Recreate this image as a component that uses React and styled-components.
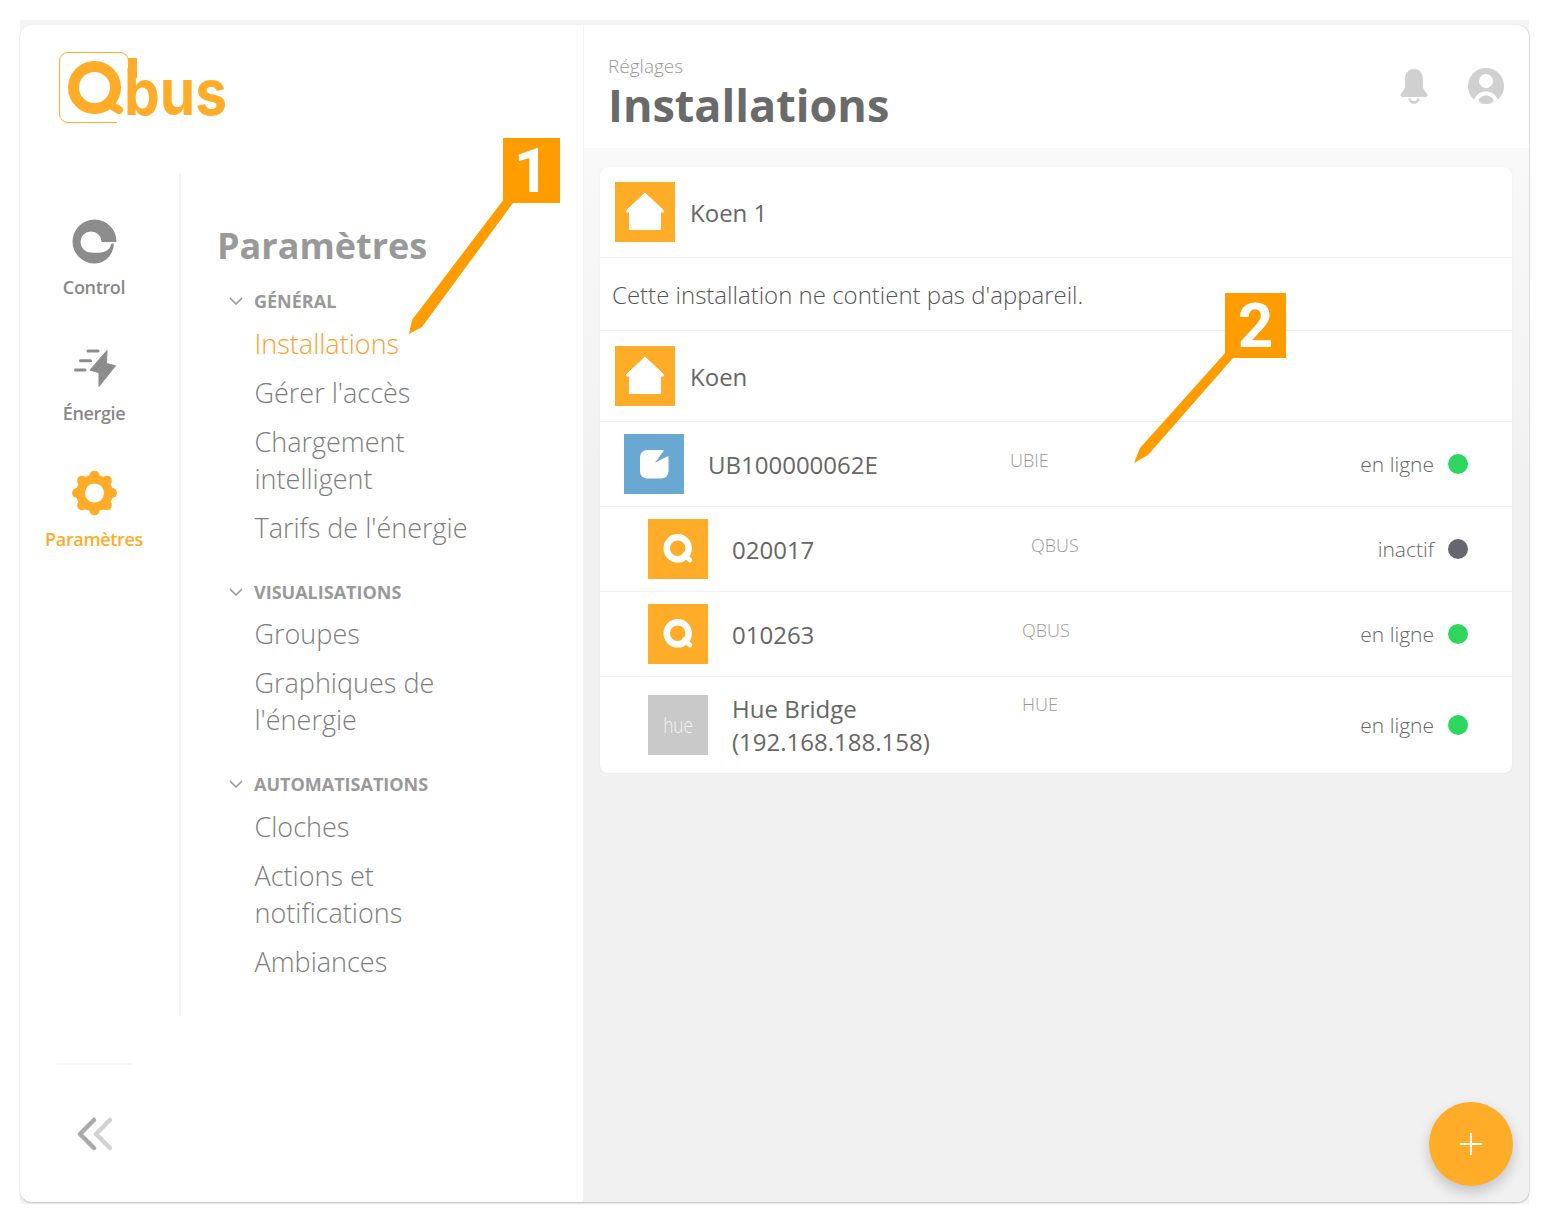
import React from "react";
import styled, { createGlobalStyle } from "styled-components";

const ORANGE = "#ffad29";
const CALLOUT = "#ff9c00";

const Global = createGlobalStyle`
  html, body { margin: 0; padding: 0; background: #fff; }
  body { font-family: "Open Sans", "Liberation Sans", sans-serif; color: #666; }
  * { box-sizing: border-box; }
`;

const Page = styled.div`
  position: relative;
  width: 1550px;
  height: 1224px;
  padding: 20px 21px 20px 20px;
  overflow: hidden;
`;
const Frame = styled.div`
  height: 1184px;
  background: #f5f5f5;
  padding-top: 5px;
`;
const Card = styled.div`
  display: flex;
  height: 1177px;
  background: #fff;
  border-radius: 12px;
  overflow: hidden;
  box-shadow: 0 1px 2px rgba(0, 0, 0, 0.22), 1px 0 1px rgba(0, 0, 0, 0.08);
`;
const Left = styled.aside`
  flex: 0 0 564px;
  display: flex;
  flex-direction: column;
  border-right: 1px solid #f4f4f4;
`;
const LogoRow = styled.div`
  height: 148px;
  padding: 27px 0 0 39px;
`;
const Columns = styled.div`
  display: flex;
  height: 843px;
`;
const Rail = styled.nav`
  flex: 0 0 161px;
  display: flex;
  flex-direction: column;
  gap: 46px;
  padding: 46px 0 0 0;
  border-right: 2px solid #f4f4f4;
`;
const RailItem = styled.div`
  display: flex;
  flex-direction: column;
  align-items: center;
  width: 148px;
  height: 80px;
  font-weight: 600;
  font-size: 18px;
  line-height: 24px;
  letter-spacing: -0.35px;
  color: ${(p) => (p.$active ? ORANGE : "#888")};
`;
const RailIcon = styled.div`
  height: 46px;
  margin-bottom: 10px;
  display: flex;
  align-items: center;
  justify-content: center;
`;
const SubNav = styled.div`
  flex: 1;
  padding: 49px 0 0 36px;
`;
const SubTitle = styled.h2`
  margin: 0 0 19px;
  font-size: 36px;
  line-height: 48px;
  font-weight: 700;
  color: #999;
`;
const Section = styled.section`
  & + & { margin-top: 34px; }
`;
const SectionHead = styled.div`
  display: flex;
  align-items: center;
  gap: 11px;
  height: 24px;
  margin: 0 0 ${(p) => p.$after}px 12px;
  font-size: 18px;
  font-weight: 700;
  color: #999;
`;
const Items = styled.ul`
  list-style: none;
  margin: 0;
  padding: 0 0 0 37.5px;
  display: flex;
  flex-direction: column;
  gap: 12px;
`;
const Item = styled.li`
  font-size: 27px;
  line-height: 37px;
  font-weight: 300;
  width: 240px;
  color: ${(p) => (p.$active ? "#ffa030" : "#7d7d7d")};
`;
const Foot = styled.div`
  width: 150px;
  padding: 47px 0 0 37px;
  display: flex;
  flex-direction: column;
`;
const FootLine = styled.div`
  width: 75px;
  height: 2px;
  background: #f5f5f5;
  margin-bottom: 51px;
`;
const CollapseBtn = styled.div`
  margin-left: 17px;
  line-height: 0;
`;
const Main = styled.main`
  flex: 1;
  display: flex;
  flex-direction: column;
  min-width: 0;
`;
const MainHead = styled.header`
  height: 123px;
  flex: none;
  display: flex;
  align-items: flex-start;
  justify-content: space-between;
  padding: 28px 25px 0 24px;
`;
const Crumb = styled.div`
  font-size: 19px;
  line-height: 26px;
  font-weight: 300;
  color: #999;
`;
const Heading = styled.h1`
  margin: 1px 0 0 0;
  font-size: 45px;
  line-height: 50px;
  font-weight: 700;
  color: #6a6a6a;
`;
const HeadIcons = styled.div`
  display: flex;
  gap: 39px;
  align-items: center;
  padding-top: 15px;
`;
const Content = styled.div`
  flex: 1;
  padding: 19px 17px 0 16px;
  background: linear-gradient(#f9f9f9, #f1f1f1 340px);
`;
const List = styled.div`
  background: #fff;
  border-radius: 8px;
  box-shadow: 0 0 2px rgba(0, 0, 0, 0.06);
  overflow: hidden;
`;
const InstallRow = styled.div`
  display: flex;
  align-items: center;
  gap: 15px;
  height: 91px;
  padding: 0 15px;
  border-bottom: 1px solid #eee;
  font-size: 24px;
`;
const Message = styled.div`
  display: flex;
  align-items: center;
  height: 73px;
  padding: 0 12px;
  border-bottom: 1px solid #eee;
  font-size: 24px;
  font-weight: 300;
  color: #555;
`;
const DeviceRow = styled.div`
  display: flex;
  align-items: center;
  min-height: 85px;
  padding: ${(p) => (p.$tall ? "15px" : "0")} 44px ${(p) => (p.$tall ? "15px" : "0")} ${(p) => p.$indent}px;
  border-bottom: 1px solid #eee;
  &:last-child { border-bottom: 0; }
`;
const Tile = styled.div`
  flex: none;
  width: 60px;
  height: 60px;
  display: flex;
  align-items: center;
  justify-content: center;
  background: ${(p) => p.$bg};
`;
const HueMark = styled.span`
  display: inline-block;
  font-size: 22px;
  font-weight: 300;
  color: #f2f2f2;
  transform: translateY(-1px) scaleX(0.78);
`;
const DeviceText = styled.div`
  flex: 1;
  display: flex;
  margin-left: 24px;
`;
const DeviceName = styled.div`
  flex: 0 0 ${(p) => p.$w}px;
  font-size: 24px;
  line-height: 33px;
  color: #666;
`;
const DeviceType = styled.div`
  font-size: 18px;
  line-height: 25px;
  font-weight: 300;
  color: #999;
`;
const Status = styled.div`
  display: flex;
  align-items: center;
  gap: 14px;
  font-size: 21px;
  font-weight: 300;
  color: #666;
`;
const Dot = styled.span`
  width: 20px;
  height: 20px;
  border-radius: 50%;
  background: ${(p) => (p.$on ? "#2fd65e" : "#66676e")};
`;
const Fab = styled.button`
  position: absolute;
  left: 1429px;
  top: 1102px;
  width: 84px;
  height: 84px;
  padding: 0;
  border: 0;
  border-radius: 50%;
  background: ${ORANGE};
  display: flex;
  align-items: center;
  justify-content: center;
  box-shadow: 0 6px 14px rgba(0, 0, 0, 0.2);
`;
const Overlay = styled.svg`
  position: absolute;
  left: 0;
  top: 0;
  pointer-events: none;
`;
const CalloutNum = styled.div`
  position: absolute;
  left: ${(p) => p.$x}px;
  top: ${(p) => p.$y}px;
  width: ${(p) => p.$w}px;
  height: 65px;
  padding-top: 1px;
  display: flex;
  align-items: center;
  justify-content: center;
  background: ${CALLOUT};
  color: #fff;
  font-family: "Roboto", "Liberation Sans", Arial, sans-serif;
  font-weight: 700;
  font-size: 62px;
  line-height: 64px;
`;
const LogoWord = styled.text`
  font-family: "Inter", "Liberation Sans", sans-serif;
  font-weight: 700;
  font-size: 64px;
  fill: ${ORANGE};
`;

const Logo = () => (
  <svg width="190" height="74" viewBox="0 0 190 74">
    <path d="M58 70.5H9A8.5 8.5 0 0 1 .5 62V9A8.5 8.5 0 0 1 9 .5H61A8.5 8.5 0 0 1 69.5 9V13" fill="none" stroke={ORANGE} strokeWidth="1" />
    <circle cx="35.5" cy="35.5" r="21" fill="none" stroke={ORANGE} strokeWidth="11" />
    <path d="M50 52L60 58" stroke={ORANGE} strokeWidth="8" strokeLinecap="round" />
    <rect x="69" y="6" width="9" height="20" fill={ORANGE} />
    <LogoWord x="65" y="63" textLength="103" lengthAdjust="spacingAndGlyphs">bus</LogoWord>
  </svg>
);

const ControlIcon = () => (
  <svg width="46" height="46" viewBox="-1 0 46 46">
    <path d="M44.5 23A22 22 0 1 0 23 44.5C33 44.5 41 36 41.8 26Q41.8 24.6 40.4 24.6Q39 24.6 38.8 26C38 31 32 35 19 33.5A10.5 10.5 0 1 1 29.5 23Z" fill="#8c8c8c" />
  </svg>
);
const EnergyIcon = () => (
  <svg width="46" height="40" viewBox="-1.5 0 46 40">
    <path d="M17.5 22L34.5 2.5L34 15.5L43 17.8L26.5 38.5L26.5 24.7Z" fill="#8c8c8c" stroke="#8c8c8c" strokeWidth="1" strokeLinejoin="round" />
    <path d="M15.5 3H25.5M8 12.7H18M3 22H12.5" stroke="#8c8c8c" strokeWidth="3" strokeLinecap="round" />
  </svg>
);
const GearIcon = () => {
  const lobes = [0, 45, 90, 135, 180, 225, 270, 315];
  return (
    <svg width="46" height="46" viewBox="-0.5 1 46 46">
      <circle cx="23" cy="23" r="18.5" fill={ORANGE} />
      {lobes.map((a) => (
        <circle key={a} cx={23 + 17.5 * Math.cos((a * Math.PI) / 180)} cy={23 + 17.5 * Math.sin((a * Math.PI) / 180)} r="5" fill={ORANGE} />
      ))}
      <circle cx="23" cy="23" r="9.5" fill="#fff" />
    </svg>
  );
};
const Chevron = () => (
  <svg width="14" height="8" viewBox="0 0 14 8">
    <path d="M1 1L7 7L13 1" fill="none" stroke="#999" strokeWidth="1.6" />
  </svg>
);
const Collapse = () => (
  <svg width="40" height="36" viewBox="0 0 40 36">
    <path d="M20 4L6 18L20 32" fill="none" stroke="#aaa" strokeWidth="4.5" strokeLinecap="round" strokeLinejoin="round" />
    <path d="M36 4L22 18L36 32" fill="none" stroke="#d2d2d2" strokeWidth="4.5" strokeLinecap="round" strokeLinejoin="round" />
  </svg>
);
const Bell = () => (
  <svg width="30" height="36" viewBox="0 0 30 36">
    <path d="M15 1C8 1 6 7 6 12V18C6 22 3 24 1.5 26.5C1 28 2 29 3.5 29H26.5C28 29 29 28 28.5 26.5C27 24 24 22 24 18V12C24 7 22 1 15 1Z" fill="#d0d0d0" />
    <path d="M10.5 30.5C11 33 13 34.5 15 34.5C17 34.5 19 33 19.5 30.5" fill="none" stroke="#d0d0d0" strokeWidth="2.4" />
  </svg>
);
const User = () => (
  <svg width="36" height="36" viewBox="0 0 36 36">
    <circle cx="18" cy="18" r="18" fill="#d0d0d0" />
    <circle cx="18" cy="13" r="7" fill="#fff" />
    <path d="M6 32C8 26 13 23.5 18 23.5C23 23.5 28 26 30 32C27 33.5 23 36 18 36C13 36 9 33.5 6 32Z" fill="#fff" />
    <path d="M10 32.5C12 29 15 27.5 18 27.5C21 27.5 24 29 26 32.5C23.5 35 21 36 18 36C15 36 12.5 35 10 32.5Z" fill="#d0d0d0" />
  </svg>
);
const House = () => (
  <svg width="60" height="60" viewBox="0 0 60 60">
    <path d="M30 11L48.5 28.5V30H45.5V47.5H14.5V30H11.5V28.5Z" fill="#fff" stroke="#fff" strokeWidth="1" strokeLinejoin="round" />
  </svg>
);
const QMark = () => (
  <svg width="60" height="60" viewBox="0 0 60 60">
    <circle cx="29.7" cy="29.3" r="11" fill="none" stroke="#fff" strokeWidth="6.5" />
    <path d="M36 36L42 41" stroke="#fff" strokeWidth="4.5" strokeLinecap="round" />
  </svg>
);
const UbieMark = () => (
  <svg width="60" height="60" viewBox="0 0 60 60">
    <rect x="16" y="16" width="28.5" height="28.5" rx="7" fill="#fff" />
    <path d="M31 28.7L41 15L46 15V21Z" fill="#6aa8d4" />
  </svg>
);

const nav = [
  { title: "GÉNÉRAL", after: 12, items: [["Installations", true], ["Gérer l'accès"], ["Chargement intelligent"], ["Tarifs de l'énergie"]] },
  { title: "VISUALISATIONS", after: 11, items: [["Groupes"], ["Graphiques de l'énergie"]] },
  { title: "AUTOMATISATIONS", after: 12, items: [["Cloches"], ["Actions et notifications"], ["Ambiances"]] },
];

const devices = [
  { name: "UB100000062E", type: "UBIE", status: "en ligne", on: true, indent: 24, w: 302, bg: "#6aa8d4", mark: <UbieMark /> },
  { name: "020017", type: "QBUS", status: "inactif", on: false, indent: 48, w: 299, bg: ORANGE, mark: <QMark /> },
  { name: "010263", type: "QBUS", status: "en ligne", on: true, indent: 48, w: 290, bg: ORANGE, mark: <QMark /> },
  { name: "Hue Bridge (192.168.188.158)", type: "HUE", status: "en ligne", on: true, indent: 48, w: 290, bg: "#c9c9c9", tall: true, mark: <HueMark>hue</HueMark> },
];

export default function App() {
  return (
    <Page>
      <Global />
      <Frame>
        <Card>
          <Left>
            <LogoRow><Logo /></LogoRow>
            <Columns>
              <Rail>
                <RailItem><RailIcon><ControlIcon /></RailIcon>Control</RailItem>
                <RailItem><RailIcon><EnergyIcon /></RailIcon>Énergie</RailItem>
                <RailItem $active><RailIcon><GearIcon /></RailIcon>Paramètres</RailItem>
              </Rail>
              <SubNav>
                <SubTitle>Paramètres</SubTitle>
                {nav.map((s) => (
                  <Section key={s.title}>
                    <SectionHead $after={s.after}><Chevron />{s.title}</SectionHead>
                    <Items>
                      {s.items.map(([label, active]) => (
                        <Item key={label} $active={active}>{label}</Item>
                      ))}
                    </Items>
                  </Section>
                ))}
              </SubNav>
            </Columns>
            <Foot>
              <FootLine />
              <CollapseBtn><Collapse /></CollapseBtn>
            </Foot>
          </Left>
          <Main>
            <MainHead>
              <div>
                <Crumb>Réglages</Crumb>
                <Heading>Installations</Heading>
              </div>
              <HeadIcons><Bell /><User /></HeadIcons>
            </MainHead>
            <Content>
              <List>
                <InstallRow><Tile $bg={ORANGE}><House /></Tile>Koen 1</InstallRow>
                <Message>Cette installation ne contient pas d'appareil.</Message>
                <InstallRow><Tile $bg={ORANGE}><House /></Tile>Koen</InstallRow>
                {devices.map((d) => (
                  <DeviceRow key={d.name} $indent={d.indent} $tall={d.tall}>
                    <Tile $bg={d.bg}>{d.mark}</Tile>
                    <DeviceText>
                      <DeviceName $w={d.w}>{d.name}</DeviceName>
                      <DeviceType>{d.type}</DeviceType>
                    </DeviceText>
                    <Status>{d.status}<Dot $on={d.on} /></Status>
                  </DeviceRow>
                ))}
              </List>
            </Content>
          </Main>
        </Card>
      </Frame>
      <Overlay width="1550" height="1224" viewBox="0 0 1550 1224">
        <path d="M504 199L513 203L422 327L409 334L412 320Z" fill={CALLOUT} />
        <path d="M1226 352L1233 358L1148 455L1134 463L1140 448Z" fill={CALLOUT} />
      </Overlay>
      <CalloutNum $x={503} $y={138} $w={57}>1</CalloutNum>
      <CalloutNum $x={1225} $y={293} $w={61}>2</CalloutNum>
      <Fab aria-label="Ajouter">
        <svg width="24" height="24" viewBox="0 0 24 24">
          <path d="M12 1V23M1 12H23" stroke="#fff" strokeWidth="2" />
        </svg>
      </Fab>
    </Page>
  );
}
